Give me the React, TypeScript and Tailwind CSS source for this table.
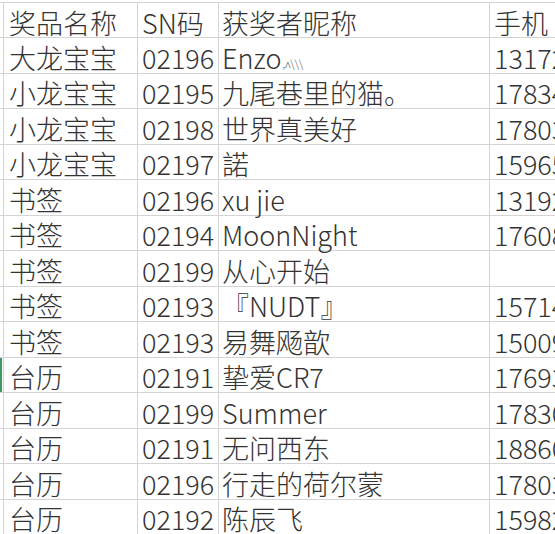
const rows: [string, string, string, string][] = [
  ["大龙宝宝", "02196", "Enzo", "13172486051"],
  ["小龙宝宝", "02195", "九尾巷里的猫。", "17834201967"],
  ["小龙宝宝", "02198", "世界真美好", "17803345218"],
  ["小龙宝宝", "02197", "諾", "15965183370"],
  ["书签", "02196", "xu jie", "13192570846"],
  ["书签", "02194", "MoonNight", "17608139925"],
  ["书签", "02199", "从心开始", ""],
  ["书签", "02193", "『NUDT』", "15714062238"],
  ["书签", "02193", "易舞飏歆", "15009427716"],
  ["台历", "02191", "挚爱CR7", "17693058124"],
  ["台历", "02199", "Summer", "17830612495"],
  ["台历", "02191", "无问西东", "18860357729"],
  ["台历", "02196", "行走的荷尔蒙", "17803914652"],
  ["台历", "02192", "陈辰飞", "15982270463"],
]

const font = { fontFamily: '"Noto Sans CJK SC", "Noto Sans", sans-serif' }

function Row({ cells, header, selected }: { cells: [string, string, string, string]; header?: boolean; selected?: boolean }) {
  return (
    <div className={`flex shrink-0 ${header ? "h-[36px] border-t border-[#d4d4d4]" : "h-[35.5px]"} border-b border-[#d4d4d4]`}>
      <div className="w-[3px] shrink-0 flex">
        {selected && <div className="w-[2px] bg-[#3f9a62]" />}
      </div>
      <div className="w-[135px] shrink-0 border-l border-r border-[#d4d4d4] flex items-center pl-[5px] pt-[5px] whitespace-nowrap">
        {cells[0]}
      </div>
      <div className="w-[81px] shrink-0 border-r border-[#d4d4d4] flex items-center pl-[4px] pt-[5px] whitespace-nowrap">
        {cells[1]}
      </div>
      <div className="w-[271px] shrink-0 border-r border-[#d4d4d4] flex items-center pl-[3px] pt-[5px] whitespace-nowrap">
        {cells[2]}
        {cells[2] === "Enzo" && <span className="text-[11px] leading-[12px] ml-[1px] mt-[10px] text-[#555]">,ʌ\\\</span>}
      </div>
      <div className="flex-1 min-w-0 flex items-center pl-[4px] pt-[5px] overflow-hidden whitespace-nowrap">
        {cells[3]}
      </div>
    </div>
  )
}

export default function App() {
  return (
    <div
      className="w-[555px] h-[534px] overflow-hidden bg-white text-[#333333] font-light text-[27px] leading-[28px] pt-[2px] flex flex-col"
      style={font}
    >
      <Row header cells={["奖品名称", "SN码", "获奖者昵称", "手机"]} />
      {rows.map((r, i) => (
        <Row key={i} cells={r} selected={i === 9} />
      ))}
    </div>
  )
}
